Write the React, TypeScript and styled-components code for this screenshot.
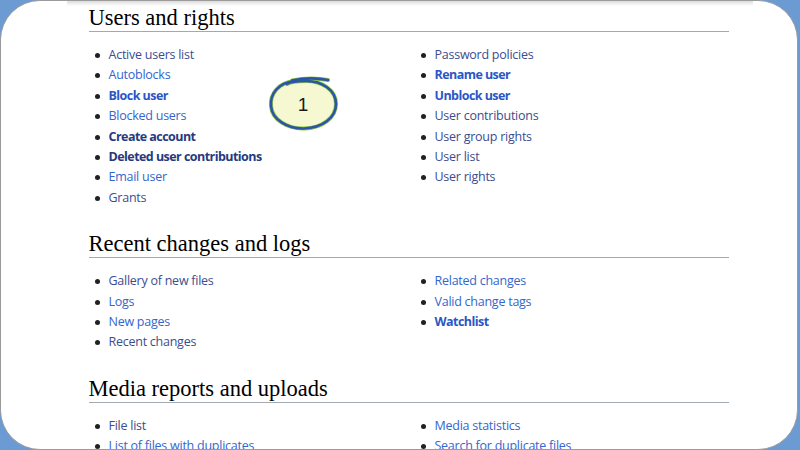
import styled, { createGlobalStyle } from 'styled-components';

type LinkKind = 'visited' | 'link' | 'boldLink' | 'boldDark';

interface Entry {
  label: string;
  kind: LinkKind;
}

interface Section {
  title: string;
  left: Entry[];
  right: Entry[];
}

const sections: Section[] = [
  {
    title: 'Users and rights',
    left: [
      { label: 'Active users list', kind: 'visited' },
      { label: 'Autoblocks', kind: 'link' },
      { label: 'Block user', kind: 'boldLink' },
      { label: 'Blocked users', kind: 'link' },
      { label: 'Create account', kind: 'boldDark' },
      { label: 'Deleted user contributions', kind: 'boldDark' },
      { label: 'Email user', kind: 'link' },
      { label: 'Grants', kind: 'visited' },
    ],
    right: [
      { label: 'Password policies', kind: 'visited' },
      { label: 'Rename user', kind: 'boldLink' },
      { label: 'Unblock user', kind: 'boldLink' },
      { label: 'User contributions', kind: 'visited' },
      { label: 'User group rights', kind: 'visited' },
      { label: 'User list', kind: 'visited' },
      { label: 'User rights', kind: 'visited' },
    ],
  },
  {
    title: 'Recent changes and logs',
    left: [
      { label: 'Gallery of new files', kind: 'visited' },
      { label: 'Logs', kind: 'link' },
      { label: 'New pages', kind: 'link' },
      { label: 'Recent changes', kind: 'visited' },
    ],
    right: [
      { label: 'Related changes', kind: 'link' },
      { label: 'Valid change tags', kind: 'link' },
      { label: 'Watchlist', kind: 'boldLink' },
    ],
  },
  {
    title: 'Media reports and uploads',
    left: [
      { label: 'File list', kind: 'visited' },
      { label: 'List of files with duplicates', kind: 'link' },
    ],
    right: [
      { label: 'Media statistics', kind: 'link' },
      { label: 'Search for duplicate files', kind: 'link' },
    ],
  },
];

const colors: Record<LinkKind, string> = {
  visited: '#3d4c8e',
  link: '#3366cc',
  boldLink: '#2a56c6',
  boldDark: '#263a80',
};

const isBold = (kind: LinkKind) => kind === 'boldLink' || kind === 'boldDark';

const App = () => {
  return (
    <>
      <GlobalStyle />
      <Backdrop>
        <Panel>
          <Page>
            <TopShade />
            {sections.map((section) => (
              <Block key={section.title}>
                <Heading>{section.title}</Heading>
                <Columns>
                  <List>
                    {section.left.map((entry) => (
                      <Item key={entry.label} kind={entry.kind}>
                        {entry.label}
                      </Item>
                    ))}
                  </List>
                  <List>
                    {section.right.map((entry) => (
                      <Item key={entry.label} kind={entry.kind}>
                        {entry.label}
                      </Item>
                    ))}
                  </List>
                </Columns>
              </Block>
            ))}
          </Page>
          <Callout>
            <svg width="80" height="62" viewBox="0 0 80 62">
              <ellipse cx="37" cy="33" rx="33" ry="23.5" fill="#f6f8d2" />
              <path
                d="M28 9 C 12 11, 4 22, 5 34 C 6 48, 22 57, 38 56.5 C 56 56, 70 46, 70 32 C 70 18, 56 9, 40 9 C 30 9, 24 10, 21 12 M26 8.5 C 38 6, 52 6, 62 8"
                fill="none"
                stroke="#8cc63e"
                strokeWidth="4"
                strokeLinecap="round"
              />
              <path
                d="M28 9 C 12 11, 4 22, 5 34 C 6 48, 22 57, 38 56.5 C 56 56, 70 46, 70 32 C 70 18, 56 9, 40 9 C 30 9, 24 10, 21 12 M26 8.5 C 38 6, 52 6, 62 8"
                fill="none"
                stroke="#2c55a8"
                strokeWidth="2.6"
                strokeLinecap="round"
              />
            </svg>
            <CalloutNumber>1</CalloutNumber>
          </Callout>
        </Panel>
      </Backdrop>
    </>
  );
};
export default App;

const GlobalStyle = createGlobalStyle`
  html, body {
    margin: 0;
    padding: 0;
    width: 800px;
    height: 450px;
    overflow: hidden;
  }
`;

const Backdrop = styled.div`
  width: 800px;
  height: 450px;
  background-color: #6b9bd2;
  display: flex;
  padding: 0 2px 0 0;
  box-sizing: border-box;
`;

const Panel = styled.div`
  position: relative;
  flex: 1;
  background-color: #ffffff;
  border: 1.5px solid #9b9b9b;
  border-radius: 40px;
  overflow: hidden;
  display: flex;
  justify-content: flex-start;
`;

const Page = styled.div`
  margin-left: 65.5px;
  width: 686px;
  padding: 0 24px 0 22px;
  box-sizing: border-box;
`;

const TopShade = styled.div`
  height: 5px;
  margin: 0 -24px 0 -22px;
  background: linear-gradient(#dcdcdc, #ffffff);
`;

const Block = styled.section`
  margin-bottom: 24px;
`;

const Heading = styled.h2`
  margin: 0;
  font-family: 'Liberation Serif', 'DejaVu Serif', serif;
  font-weight: 400;
  font-size: 22.5px;
  line-height: 24px;
  color: #000000;
  padding-top: 0;
  border-bottom: 1px solid #a2a9b1;
  padding-bottom: 1px;
`;

const Columns = styled.div`
  display: grid;
  grid-template-columns: 326px 1fr;
  padding-top: 13px;
`;

const List = styled.ul`
  margin: 0;
  padding: 0;
  list-style: none;
`;

const Item = styled.li<{ kind: LinkKind }>`
  position: relative;
  padding-left: 20px;
  height: 20.4px;
  line-height: 20.4px;
  font-family: 'Open Sans', 'Noto Sans', sans-serif;
  font-size: 12.5px;
  letter-spacing: ${(props) => (isBold(props.kind) ? '-0.55px' : '-0.25px')};
  white-space: nowrap;
  color: ${(props) => colors[props.kind]};
  font-weight: ${(props) => (isBold(props.kind) ? 700 : 400)};

  &::before {
    content: '';
    position: absolute;
    left: 6px;
    top: 8px;
    width: 5px;
    height: 5px;
    border-radius: 50%;
    background-color: #202122;
  }
`;

const Callout = styled.div`
  position: absolute;
  left: 265px;
  top: 71px;
  width: 80px;
  height: 62px;
`;

const CalloutNumber = styled.span`
  position: absolute;
  left: 0;
  top: 22px;
  width: 74px;
  text-align: center;
  font-family: 'Liberation Sans', Arial, sans-serif;
  font-size: 19px;
  line-height: 22px;
  color: #1a1a1a;
`;
